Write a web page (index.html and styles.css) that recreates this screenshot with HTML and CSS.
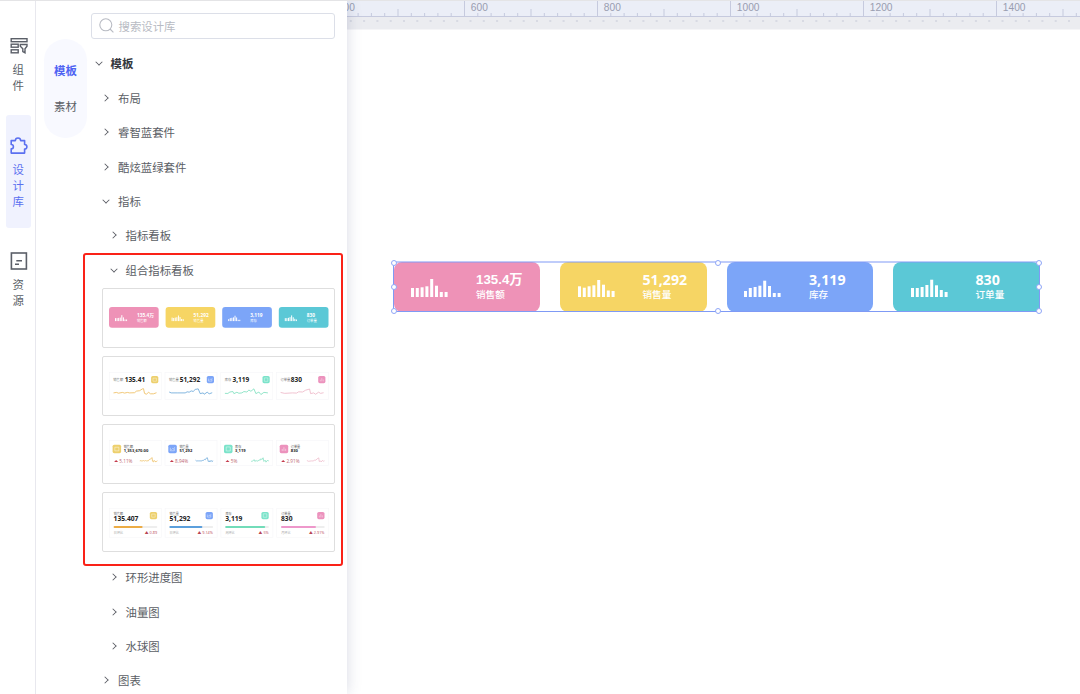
FILE: index.html
```
<!DOCTYPE html>
<html lang="zh-CN">
<head>
  <meta charset="UTF-8">
  <meta name="viewport" content="width=device-width, initial-scale=1.0">
  <title>设计库</title>
  <link rel="stylesheet" href="styles.css">
</head>
<body>
  <nav class="rail">
    <div class="rail-item">
      <svg width="18" height="18" viewBox="0 0 18 18" fill="none" stroke="currentColor" stroke-width="1.4">
        <rect x="1.2" y="1.7" width="15.8" height="3"/>
        <rect x="1.2" y="7.2" width="7" height="3"/>
        <rect x="1.2" y="12.8" width="7" height="3"/>
        <path d="M10.3 7.5h6.7v1.8l-2 2.5v4l-2.2-1.3v-2.7l-2.5-2.5z"/>
      </svg>
      <span>组件</span>
    </div>
    <div class="rail-item active">
      <svg width="18" height="18" viewBox="0 0 18 18" fill="none" stroke="currentColor" stroke-width="1.6" stroke-linejoin="round">
        <path d="M1.2 3.6h4.2a2.6 2.6 0 0 1 5.2 0h4v3.9a2.3 2.3 0 0 1 0 4.6v4H1.2v-4.2a2.2 2.2 0 0 0 0-4.4z"/>
      </svg>
      <span>设计库</span>
    </div>
    <div class="rail-item">
      <svg width="18" height="18" viewBox="0 0 18 18" fill="none" stroke="currentColor" stroke-width="1.6">
        <rect x="1.4" y="1" width="15" height="16"/>
        <path d="M6.3 8.8h5.7M5 12.3h4"/>
      </svg>
      <span>资源</span>
    </div>
  </nav>

  <aside class="library">
    <div class="tabs">
      <span class="tab active">模板</span>
      <span class="tab">素材</span>
    </div>
    <div class="library-main">
      <div class="search">
        <svg width="15" height="15" viewBox="0 0 15 15" fill="none" stroke="currentColor" stroke-width="1.1">
          <circle cx="6.8" cy="6.8" r="6"/>
          <path d="M11 11l3.4 3.3"/>
        </svg>
        <span>搜索设计库</span>
      </div>
      <div class="tree">
        <div class="node open root"><i></i>模板</div>
        <div class="node level-1"><i></i>布局</div>
        <div class="node level-1"><i></i>睿智蓝套件</div>
        <div class="node level-1"><i></i>酷炫蓝绿套件</div>
        <div class="node level-1 open"><i></i>指标</div>
        <div class="node level-2"><i></i>指标看板</div>
        <div class="group">
          <div class="node level-2 open"><i></i>组合指标看板</div>
          <div class="thumbs" id="thumbs"></div>
          <div class="highlight"></div>
        </div>
        <div class="node level-2"><i></i>环形进度图</div>
        <div class="node level-2"><i></i>油量图</div>
        <div class="node level-2"><i></i>水球图</div>
        <div class="node level-1"><i></i>图表</div>
      </div>
    </div>
  </aside>

  <main class="workspace">
    <svg class="ruler" id="ruler" width="733" height="29"></svg>
    <div class="canvas">
      <div class="selection">
        <div class="card pink"><svg class="bars" width="38" height="20"></svg><div><b class="mixed">135.4万</b><span>销售额</span></div></div>
        <div class="card yellow"><svg class="bars" width="38" height="20"></svg><div><b>51,292</b><span>销售量</span></div></div>
        <div class="card blue"><svg class="bars" width="38" height="20"></svg><div><b>3,119</b><span>库存</span></div></div>
        <div class="card teal"><svg class="bars" width="38" height="20"></svg><div><b>830</b><span>订单量</span></div></div>
        <div class="frame">
          <i class="handle nw"></i><i class="handle n"></i><i class="handle ne"></i>
          <i class="handle w"></i><i class="handle e"></i>
          <i class="handle sw"></i><i class="handle s"></i><i class="handle se"></i>
        </div>
      </div>
    </div>
  </main>
  <script src="main.js"></script>
</body>
</html>
```
FILE: styles.css
```
* {
  box-sizing: border-box;
}

body {
  margin: 0;
  height: 694px;
  display: flex;
  overflow: hidden;
  border-top: 1px solid #e4e4e6;
  background: #fff;
  color: #5b5e65;
  font-family: "Noto Sans CJK SC", sans-serif;
  font-size: 11.4px;
}

svg {
  display: block;
  flex: none;
}

/* left rail */
.rail {
  width: 36px;
  flex: none;
  padding: 14px 4px 0 6px;
  border-right: 1px solid #e8e8ee;
}

.rail-item {
  height: 113px;
  padding-top: 21.5px;
  display: flex;
  flex-direction: column;
  align-items: center;
  border-radius: 3px;
  color: #5b5f68;
}

.rail-item + .rail-item {
  margin-top: 3px;
}

.rail-item:first-child {
  height: 97px;
}

.rail-item:last-child {
  padding-top: 21px;
}

.rail-item span {
  width: 12px;
  margin-top: 6px;
  line-height: 16px;
  word-break: break-all;
}

.rail-item.active {
  background: #f0f2fe;
  color: #5b70f0;
}

/* library panel */
.library {
  width: 311px;
  flex: none;
  display: flex;
  gap: 4px;
  padding: 12px 12px 0 8px;
  background: #fff;
  box-shadow: 0 0 14px rgba(60, 70, 120, 0.2);
  clip-path: inset(0 -20px 0 0);
  z-index: 1;
}

.tabs {
  width: 43px;
  height: 99px;
  margin-top: 26px;
  padding-top: 13px;
  flex: none;
  border-radius: 22px;
  background: #f8f9ff;
  text-align: center;
}

.tab {
  display: block;
  height: 35.5px;
  line-height: 36px;
}

.tab.active {
  color: #4f63f3;
  font-weight: 600;
}

.library-main {
  flex: 1;
}

.search {
  height: 26px;
  display: flex;
  align-items: center;
  gap: 4.5px;
  padding: 0 7px 1px;
  border: 1px solid #dcdfe8;
  border-radius: 3px;
  color: #b8bbc3;
}

.tree {
  padding-top: 7.3px;
}

.node {
  height: 34.35px;
  display: flex;
  align-items: center;
  gap: 7.5px;
  padding-left: 3px;
}

.node.root {
  color: #33363d;
  font-weight: 600;
}

.level-1 {
  padding-left: 10.5px;
}

.level-2 {
  padding-left: 18px;
}

.node i {
  width: 9px;
  height: 9px;
  display: grid;
  place-items: center;
}

/* the border adds to the drawn size, keep the box small */
.node i::before {
  content: "";
  width: 5px;
  height: 5px;
  margin-left: -2px;
  border: solid #50535a;
  border-width: 1px 1px 0 0;
  transform: rotate(45deg) scale(0.85);
}

.node.open i::before {
  margin: -2px 0 0;
  transform: rotate(135deg) scale(0.85);
}

.group {
  position: relative;
}

.highlight {
  position: absolute;
  top: 0.6px;
  left: -8px;
  right: -8px;
  bottom: -6px;
  border: 2px solid #fa2218;
  border-radius: 3px;
}

.thumbs {
  display: flex;
  flex-direction: column;
  gap: 7.6px;
  padding: 1px 0 8px 11px;
}

.thumb {
  height: 60.4px;
  border: 1px solid #dedede;
  border-radius: 2px;
}

.thumb text {
  font-family: "Open Sans", "Noto Sans CJK SC", sans-serif;
}

/* workspace */
.workspace {
  flex: 1;
  min-width: 0;
}

.ruler text {
  font: 10.2px "Liberation Sans", sans-serif;
  fill: #999db0;
}

.canvas {
  padding: 232px 0 0 46.5px;
}

.selection {
  position: relative;
  width: 646px;
  height: 50px;
  display: grid;
  grid-template-columns: repeat(4, 1fr);
  gap: 20px;
}

.card {
  display: flex;
  gap: 27px;
  padding: 9px 0 0 17.5px;
  border-radius: 8px;
  color: #fff;
}

.card svg {
  margin-top: 6px;
}

.card b,
.card span {
  display: block;
  white-space: nowrap;
}

.card b {
  height: 18px;
  font: bold 14.2px/18px "Open Sans", "Noto Sans CJK SC", sans-serif;
}

.card b.mixed {
  font: bold 13.3px/18px "Liberation Sans", "Noto Sans CJK SC", sans-serif;
}

.card span {
  margin-top: -1px;
  font-size: 9.6px;
  font-weight: 500;
  line-height: 12px;
}

.pink { background: #ee92b7; }
.yellow { background: #f6d564; }
.blue { background: #7ca5f8; }
.teal { background: #5bc8d6; }

.frame {
  position: absolute;
  inset: -1px -0.5px 0;
  border: 1px solid #7f9af5;
  border-top: 2px solid rgba(127, 154, 245, 0.5);
}

.handle {
  position: absolute;
  width: 6px;
  height: 6px;
  border: 1.3px solid #8fa6f7;
  border-radius: 50%;
  background: #fff;
  transform: translate(-50%, -50%);
}

.nw, .n, .ne { top: -0.5px; }
.w, .e { top: 50%; }
.sw, .s, .se { top: 100%; }
.nw, .w, .sw { left: 0; }
.n, .s { left: calc(50% + 1.5px); }
.ne, .e, .se { left: 100%; }
```
FILE: main.js
```
const bars = [
  [9, 9, 9.7, 10.7, 18, 11.3, 5, 5],
  [10.7, 9.3, 10.7, 11.7, 17, 12.3, 6.5, 6],
  [6, 9, 10, 11.3, 16.3, 11, 4, 4],
  [9, 9, 10, 12, 17.3, 11.7, 7, 5]
];

const drawBars = (values) =>
  values.map((h, i) => `<rect x="${i * 4.8}" y="${20 - h}" width="3" height="${h}" fill="#fff"/>`).join('');

document.querySelectorAll('.bars').forEach((svg, i) => {
  svg.innerHTML = drawBars(bars[i]);
});

// ruler: 200 units = 133px
const step = 13.3;
let ruler = '<rect width="733" height="15.5" fill="#ebeef7"/><rect y="15" width="733" height="1" fill="#c6cade"/><rect y="16" width="733" height="12.5" fill="#ebecf0"/>';
for (let i = 0; i < 58; i++) {
  const x = -16 + i * step;
  const top = i % 10 === 0 ? 0 : i % 5 === 0 ? 8 : 12;
  ruler += `<rect x="${x}" y="${top}" width="1" height="${15 - top}" fill="#c6cade"/>`;
  ruler += `<rect x="${x + 5.5}" y="19" width="2" height="2" fill="#d8dae3"/>`;
  if (i % 10 === 0) ruler += `<text x="${x + 6.8}" y="9.5">${400 + i * 20}</text>`;
}
document.getElementById('ruler').innerHTML = ruler;

// template thumbnails
const labels = ['销售额', '销售量', '库存', '订单量'];
const icons = ['#edd06d', '#7ca5f8', '#7be3ca', '#ec92bd'];
const lines = ['#ecb64e', '#5b9fd6', '#72dcb9', '#ecb0c2'];
const spark = [
  '0,5 3,4.5 5,5.3 9,4.5 11,5.2 14,4.5 16,5 21,4.8 23,3 26,2.6 29,0.5 30,0.3 31,5.5 33,6.5 35,4.2 37,6 40,6 43,4.8',
  '0,4 2,5 8,5 16,5 18,3.8 20,4.2 22,2.8 24,3.4 26,1.2 29,0.5 31,5.8 34,5 35,6.5 38,4.2 40,6 43,4.8',
  '0,5.5 3,5.6 5,4 8,3.5 9,5.8 12,4.3 14,5.4 17,5 19,3.5 22,4 24,1.8 26,3.2 29,0.5 31,5.8 34,4 36,6.8 39,4.4 43,5',
  '0,4.5 4,5.5 12,5 16,5.2 18,3.8 22,4 25,2 29,0.7 30,5.8 33,5 35,6.5 38,4.2 40,5.5 43,4.8'
];

const text = (x, y, size, fill, value, extra = '') =>
  `<text x="${x}" y="${y}" font-size="${size}" fill="${fill}" ${extra}>${value}</text>`;

const icon = (x, y, size, i) => {
  const glyphs = ['M2.2 2.5h4v3.6h-4z', 'M2 3v3h4V4M3 5l1.3-1.3 1 .7L6.3 2.5', 'M2.2 2.2h4v4h-4z', 'M2.5 4.3v2M4.2 2.5v3.8M5.9 4v2.3'];
  return `<rect x="${x}" y="${y}" width="${size}" height="${size}" rx="1.6" fill="${icons[i]}"/>
    <path transform="translate(${x} ${y}) scale(${size / 8.4})" d="${glyphs[i]}" fill="none" stroke="#fff" stroke-opacity=".55" stroke-width=".8"/>`;
};

const panel = '<rect x="0" y="0" width="52" height="27" fill="none" stroke="#f7f7f9" stroke-width=".7"/>';
const bold = 'font-weight="700"';

const thumbs = [
  {
    pitch: 56.6, x: 6, y: 18,
    draw: (i) => `<rect width="49.7" height="20.7" rx="3" fill="${['#ee92b7', '#f6d564', '#7ca5f8', '#5bc8d6'][i]}"/>
      <g transform="translate(6 7.5) scale(.33)">${drawBars(bars[i])}</g>` +
      text(28, 9.6, 4.8, '#fff', ['135.4万', '51,292', '3,119', '830'][i], bold) +
      text(28, 14.8, 3.3, '#fff', labels[i])
  },
  {
    pitch: 55.7, x: 6.3, y: 15.6,
    draw: (i) => panel +
      text(4, 8.1, 3.3, '#777', labels[i]) +
      text([15.4, 14.7, 11.8, 14.4][i], 9.6, 6.5, '#222', ['135.41', '51,292', '3,119', '830'][i], bold) +
      icon(41.8, 3.4, 7.2, i) +
      `<polyline transform="translate(4.2 15.8) scale(1 .9)" points="${spark[i]}" fill="none" stroke="${lines[i]}" stroke-width=".8"/>`
  },
  {
    pitch: 55.7, x: 6.3, y: 15.4,
    draw: (i) => panel.replace('height="27"', 'height="25"') +
      icon(3.3, 4.3, 8.5, i) +
      text(14.4, 8.1, 3.1, '#555', labels[i]) +
      text(14.4, 12, 4.1, '#222', ['1,353,670.00', '51,292', '3,119', '830'][i], bold) +
      '<path d="M4.8 21.6l2-2 2 2z" fill="#c43a4c"/>' +
      text(10, 22.2, 4.7, '#bd6672', ['5.11%', '8.94%', '5%', '2.91%'][i]) +
      `<polyline transform="translate(30.5 17) scale(.41 .7)" points="${spark[i]}" fill="none" stroke="${lines[i]}" stroke-width="1.2"/>`
  },
  {
    pitch: 55.8, x: 6.3, y: 15.3,
    draw: (i) => panel.replace('height="27"', 'height="29"') +
      text(4.5, 6.5, 3.1, '#666', labels[i]) +
      text(4.3, 12.6, 6.7, '#222', ['135.407', '51,292', '3,119', '830'][i], bold) +
      icon(40.5, 3.6, 7.3, i) +
      `<rect x="4.3" y="17.7" width="43.7" height="2" rx="1" fill="#eee"/>
      <rect x="4.3" y="17.7" width="${[29, 33, 40, 35][i]}" height="2" rx="1" fill="${['#ecac45', '#5b9fdc', '#72dcb9', '#ee98cb'][i]}"/>` +
      text(4.5, 26.1, 3.1, '#aaa', ['日环比', '日环比', '周环比', '月环比'][i]) +
      text(47.8, 26.1, 3.8, '#b84554', ['▲ 0.89', '▲ 9.14%', '▲ 5%', '▲ 2.91%'][i], 'text-anchor="end"')
  }
];

document.getElementById('thumbs').innerHTML = thumbs.map((t) =>
  '<div class="thumb"><svg width="231" height="58">' +
  labels.map((_, i) => `<g transform="translate(${t.x + i * t.pitch} ${t.y})">${t.draw(i)}</g>`).join('') +
  '</svg></div>').join('');
```
